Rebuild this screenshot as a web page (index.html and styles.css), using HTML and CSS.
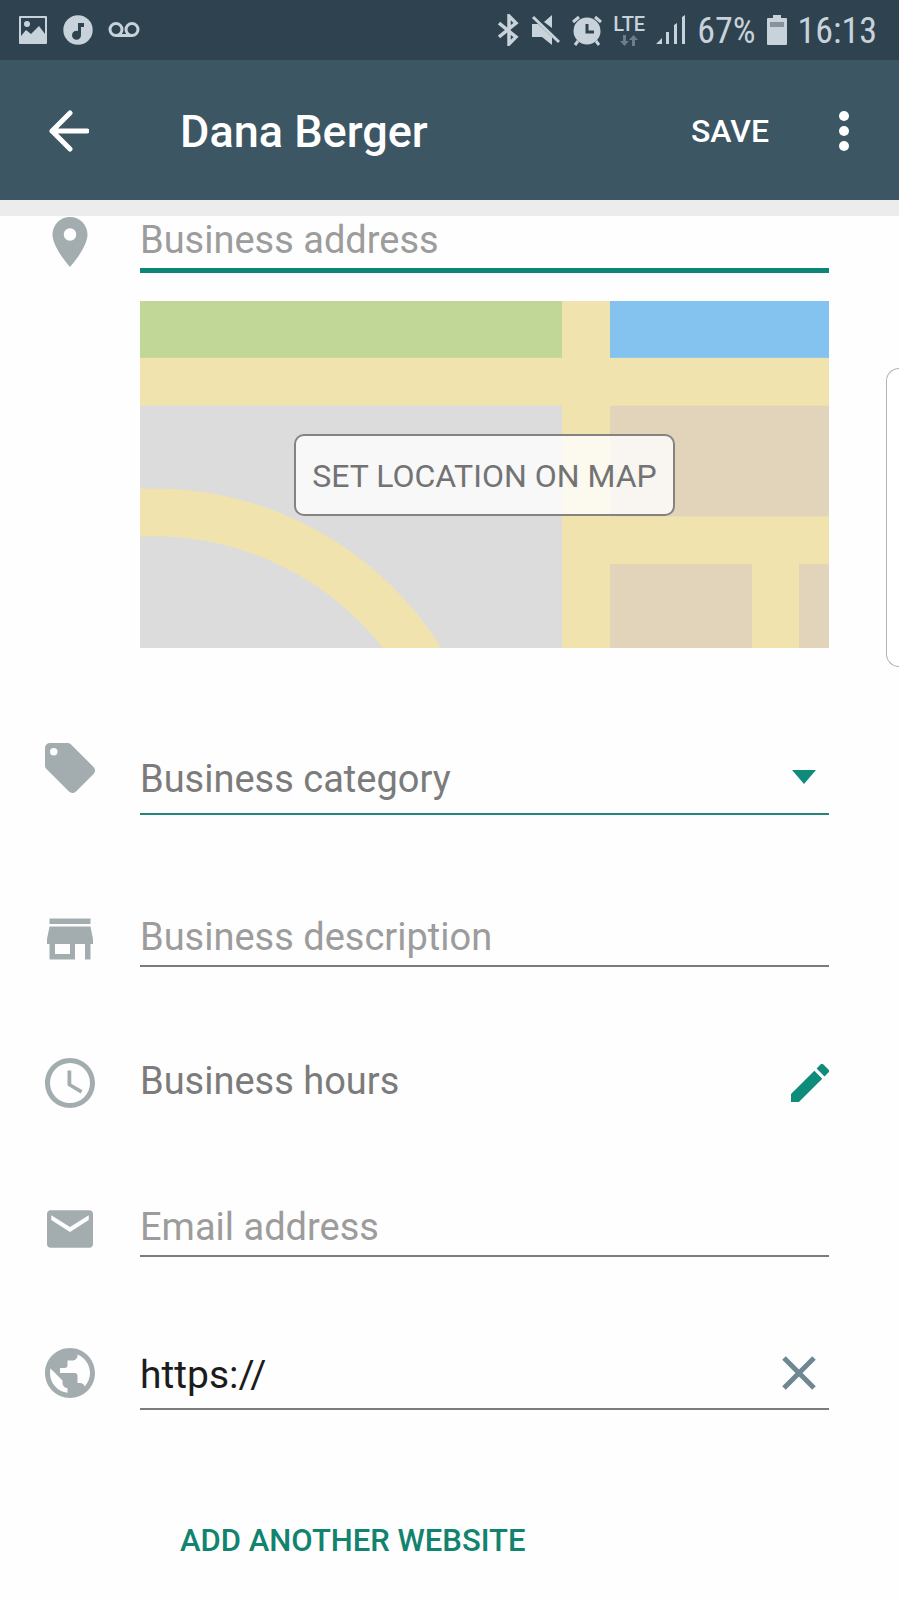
FILE: index.html
```html
<!DOCTYPE html>
<html lang="en">
<head>
<meta charset="utf-8">
<meta name="viewport" content="width=device-width, initial-scale=1">
<title>Dana Berger</title>
<link rel="stylesheet" href="styles.css">
</head>
<body>
<div class="status-bar">
  <div class="status-group status-left">
    <svg width="30" height="30" viewBox="0 0 30 30" aria-hidden="true"><path fill="currentColor" fill-rule="evenodd" d="M2 1h26a1 1 0 0 1 1 1v26a1 1 0 0 1-1 1H2a1 1 0 0 1-1-1V2a1 1 0 0 1 1-1zM3 3v18l5-6 5 4 8-8 6 8V3zM9 6a3 3 0 1 1 0 6 3 3 0 0 1 0-6z"/></svg>
    <svg width="30" height="30" viewBox="0 0 30 30" aria-hidden="true"><circle cx="15" cy="15" r="14.7" fill="currentColor"/><path class="status-cut" d="M15 8h6v4h-3v8a4.5 4.5 0 1 1-3-4z"/></svg>
    <svg width="32" height="16" viewBox="0 0 32 16" fill="none" stroke="currentColor" stroke-width="3" aria-hidden="true"><circle cx="8" cy="7.5" r="6"/><circle cx="24" cy="7.5" r="6"/><path d="M8 13.5h16"/></svg>
  </div>
  <div class="status-group status-right">
    <svg width="22" height="32" viewBox="0 0 22 32" fill="none" stroke="currentColor" stroke-width="3.5" aria-hidden="true"><path d="M1 9l17 14-7 7V2l7 7L1 23"/></svg>
    <svg class="mute" width="30" height="30" viewBox="0 0 30 30" aria-hidden="true"><path fill="currentColor" d="M1 9h6l14 13v8l-10-8H1zM21 0v13l-8-6z"/><path d="M2 2l26 25" stroke="currentColor" stroke-width="3"/></svg>
    <svg width="30" height="31" viewBox="0 0 30 31" aria-hidden="true"><circle cx="15" cy="16" r="13.5" fill="currentColor"/><path d="M1 7l6-5M29 7l-6-5M6 26l-3 4M24 26l3 4" stroke="currentColor" stroke-width="3"/><path class="status-hand" d="M15 9v8h7"/></svg>
    <div class="network">
      <span class="lte">LTE</span>
      <svg width="18" height="11" viewBox="0 0 18 11" aria-hidden="true"><path fill="currentColor" d="M3 0h3v6h3L4.500 11 0 6h3zM12 11h3V5h3L13.500 0 9 5h3z"/></svg>
    </div>
    <svg width="30" height="30" viewBox="0 0 30 30" fill="currentColor" aria-hidden="true"><path d="M0 29l6-6v6zM10 17h3v12h-3zM18 10l3-2v21h-3zM26 2l3-2v29h-3z"/></svg>
    <span class="status-text">67%</span>
    <svg width="20" height="31" viewBox="0 0 20 31" aria-hidden="true"><path fill="currentColor" d="M6 0h8v3h5a1 1 0 0 1 1 1v25a1 1 0 0 1-1 1H1a1 1 0 0 1-1-1V4a1 1 0 0 1 1-1h5z"/><path fill="#87929b" d="M3 7h14v5H3z"/></svg>
    <span class="status-text">16:13</span>
  </div>
</div>

<header class="app-bar">
  <button class="icon-button" type="button" aria-label="Back">
    <svg width="40" height="42" viewBox="0 0 40 42" fill="none" stroke="currentColor" stroke-width="5" stroke-linecap="round" stroke-linejoin="round" aria-hidden="true"><path d="M21 3L3 21l18 18M3 21h35"/></svg>
  </button>
  <h1 class="title">Dana Berger</h1>
  <button class="save" type="button">SAVE</button>
  <button class="icon-button" type="button" aria-label="More options">
    <svg width="10" height="42" viewBox="0 0 10 42" fill="currentColor" aria-hidden="true"><circle cx="5" cy="6" r="5"/><circle cx="5" cy="21" r="5"/><circle cx="5" cy="36" r="5"/></svg>
  </button>
</header>

<form class="profile">
  <div class="row">
    <svg class="row-icon" viewBox="2 2 20 20" aria-hidden="true"><path d="M12 2C8.130 2 5 5.130 5 9c0 5.250 7 13 7 13s7-7.750 7-13c0-3.870-3.130-7-7-7zm0 9.500a2.500 2.500 0 1 1 0-5 2.500 2.500 0 0 1 0 5z"/></svg>
    <div class="content">
      <div class="field field-active"><input type="text" aria-label="Business address" placeholder="Business address"></div>
      <div class="map">
        <svg class="map-art" viewBox="0 0 689 348" preserveAspectRatio="none" aria-hidden="true">
          <rect width="689" height="348" fill="#f0e3ad"/>
          <rect width="422" height="57" fill="#c0d797"/>
          <rect x="470" width="219" height="57" fill="#84c2ef"/>
          <rect y="105" width="422" height="243" fill="#dcdcdc"/>
          <rect x="470" y="105" width="219" height="111" fill="#e2d3bb"/>
          <rect x="470" y="264" width="142" height="84" fill="#e2d3bb"/>
          <rect x="659" y="264" width="30" height="84" fill="#e2d3bb"/>
          <circle cx="13" cy="528" r="316" fill="none" stroke="#f0e3ad" stroke-width="48"/>
        </svg>
        <button class="map-button" type="button">SET LOCATION ON MAP</button>
      </div>
    </div>
  </div>

  <div class="row row-category">
    <svg class="row-icon" viewBox="2 2 20 20" aria-hidden="true"><path d="M21.410 11.580l-9-9C12.050 2.220 11.550 2 11 2H4c-1.100 0-2 .9-2 2v7c0 .55.220 1.050.590 1.420l9 9c.36.360.860.580 1.410.580.550 0 1.050-.220 1.410-.590l7-7c.370-.360.590-.860.590-1.410 0-.550-.230-1.060-.590-1.420zM5.500 7a1.500 1.500 0 1 1 0-3 1.500 1.500 0 0 1 0 3z"/></svg>
    <div class="content field field-select">
      <select aria-label="Business category"><option>Business category</option></select>
      <svg class="caret" width="26" height="14" viewBox="0 0 26 14" aria-hidden="true"><path fill="currentColor" d="M1 0h24L13 14z"/></svg>
    </div>
  </div>

  <div class="row row-description">
    <svg class="row-icon" viewBox="2 2 20 20" aria-hidden="true"><path d="M20.200 3.800H3.800v2.200h16.400V3.800zm1 10.200v-2l-1-5H3.800l-1 5v2h1v6.200h10.200V14h4v6.200h2.200V14h1zm-9.200 4H6v-4h6v4z"/></svg>
    <div class="content field"><input type="text" aria-label="Business description" placeholder="Business description"></div>
  </div>

  <div class="row row-hours">
    <svg class="row-icon" viewBox="2 2 20 20" aria-hidden="true"><path d="M11.990 2C6.470 2 2 6.480 2 12s4.470 10 9.990 10C17.520 22 22 17.520 22 12S17.520 2 11.990 2zM12 20a8 8 0 1 1 0-16 8 8 0 0 1 0 16zm.5-13H11v6l5.250 3.150.750-1.230-4.500-2.670z"/></svg>
    <div class="content hours">
      <span>Business hours</span>
      <button class="icon-button edit" type="button" aria-label="Edit business hours">
        <svg width="38" height="38" viewBox="3 3 18 18" aria-hidden="true"><path fill="currentColor" d="M3 17.250V21h3.750L17.810 9.940l-3.750-3.750L3 17.250zM20.710 7.040a1 1 0 0 0 0-1.410l-2.340-2.340a1 1 0 0 0-1.410 0l-1.830 1.830 3.750 3.750 1.830-1.830z"/></svg>
      </button>
    </div>
  </div>

  <div class="row row-email">
    <svg class="row-icon" viewBox="2 2 20 20" aria-hidden="true"><path fill-rule="evenodd" d="M4.200 4.500h15.600c.75 0 1.400.65 1.400 1.400v12.200c0 .75-.65 1.400-1.400 1.400H4.200c-.75 0-1.400-.65-1.400-1.400V5.900c0-.75.650-1.400 1.400-1.400zM4.500 6.500v1.900L12 13.200l7.500-4.800V6.500L12 11.200z"/></svg>
    <div class="content field"><input type="email" aria-label="Email address" placeholder="Email address"></div>
  </div>

  <div class="row row-website">
    <svg class="row-icon" viewBox="2 2 20 20" aria-hidden="true"><path d="M12 2C6.480 2 2 6.480 2 12s4.480 10 10 10 10-4.480 10-10S17.520 2 12 2zm-1 17.930c-3.950-.490-7-3.850-7-7.930 0-.620.080-1.210.210-1.790L9 15v1c0 1.100.9 2 2 2v1.930zm6.900-2.540c-.260-.810-1-1.390-1.900-1.390h-1v-3c0-.550-.450-1-1-1H8v-2h2c.550 0 1-.450 1-1V7h2c1.100 0 2-.9 2-2v-.410c2.930 1.190 5 4.060 5 7.410 0 2.080-.8 3.970-2.100 5.390z"/></svg>
    <div class="content field field-website">
      <input type="text" aria-label="Website" value="https://">
      <button class="icon-button clear" type="button" aria-label="Clear website">
        <svg width="34" height="34" viewBox="0 0 34 34" fill="none" stroke="currentColor" stroke-width="5" aria-hidden="true"><path d="M2 2l30 30M32 2L2 32"/></svg>
      </button>
    </div>
  </div>

  <button class="add-website" type="button">ADD ANOTHER WEBSITE</button>
</form>
<div class="edge-handle"></div>
</body>
</html>
```
FILE: styles.css
```css
* {
  box-sizing: border-box;
}

body {
  position: relative;
  margin: 0;
  background: #fefefe;
  color: #7b7b7b;
  font-family: Roboto, "Liberation Sans", sans-serif;
  font-size: 38px;
  line-height: 48px;
}

svg {
  display: block;
  flex: none;
}

button,
input,
select {
  margin: 0;
  padding: 0;
  border: 0;
  border-radius: 0;
  outline: 0;
  background: none;
  color: inherit;
  font: inherit;
}

.status-bar {
  display: flex;
  justify-content: space-between;
  height: 60px;
  padding: 0 22px 0 18px;
  background: #2e424f;
  color: #c8d2da;
}

.status-group {
  display: flex;
  align-items: center;
}

.status-left {
  gap: 15px;
}

.status-right {
  gap: 11px;
}

.status-text {
  padding-top: 2px;
  font-family: "Roboto Condensed", Roboto, sans-serif;
  font-size: 36px;
}

.status-cut {
  fill: #2e424f;
}

.status-hand {
  fill: none;
  stroke: #2e424f;
  stroke-width: 3;
}

.network {
  display: flex;
  flex-direction: column;
  align-items: center;
  gap: 2px;
}

.network svg {
  color: #6d7d88;
}

.lte {
  font-size: 20px;
  font-weight: 500;
  line-height: 18px;
}

.app-bar {
  display: flex;
  align-items: center;
  height: 140px;
  padding: 2px 50px 0 49px;
  background: #3c5663;
  color: #fff;
}

.icon-button {
  display: flex;
  flex: none;
}

.title {
  flex: 1;
  margin: 0 0 0 91px;
  padding-top: 2px;
  font-size: 45px;
  font-weight: 500;
  line-height: 54px;
}

.save {
  margin-right: 70px;
  font-size: 32px;
  font-weight: 500;
  line-height: 40px;
}

.profile {
  padding: 0 70px 30px 45px;
  border-top: 16px solid #ececec;
}

.row {
  display: flex;
  align-items: flex-start;
  gap: 45px;
}

.row-icon {
  width: 50px;
  height: 50px;
  margin-top: 1px;
  fill: #a3adb0;
}

.content {
  flex: 1;
  min-width: 0;
}

.field {
  display: flex;
  padding-bottom: 4px;
  border-bottom: 2px solid #7c7c7c;
}

.field input,
.field select {
  flex: 1;
  min-width: 0;
  height: 48px;
}

.field input::placeholder {
  color: #9c9c9c;
  opacity: 1;
}

.field-active {
  border-bottom: 5px solid #0f8577;
}

.map {
  display: grid;
  place-items: center;
  margin-top: 28px;
}

.map-art,
.map-button {
  grid-area: 1 / 1;
}

.map-art {
  width: 100%;
  height: 347px;
}

.map-button {
  z-index: 1;
  padding: 20px 16px 18px;
  border: 2px solid #858380;
  border-radius: 10px;
  background: rgba(255, 255, 255, 0.8);
  color: #737373;
  font-size: 32px;
  line-height: 40px;
}

.row-category {
  margin-top: 94px;
}

.field-select {
  align-items: center;
  padding: 13px 12px 10px 0;
  border-bottom-color: #26857a;
}

.field-select select {
  appearance: none;
}

.caret {
  margin-bottom: 4px;
  color: #0f8b7c;
}

.row-description {
  margin-top: 98px;
}

.row-hours {
  margin-top: 90px;
}

.hours {
  display: flex;
  align-items: center;
  justify-content: space-between;
}

.edit {
  padding-top: 4px;
  color: #0f8b7c;
}

.row-email {
  margin-top: 95px;
}

.row-website {
  margin-top: 90px;
}

.field-website {
  align-items: center;
  padding: 4px 13px 9px 0;
}

.field-website input {
  color: #1c1c1c;
  font-size: 39px;
}

.clear {
  padding-bottom: 4px;
  color: #6f8792;
}

.add-website {
  margin: 111px 0 0 135px;
  color: #12836f;
  font-size: 31px;
  font-weight: 500;
  line-height: 40px;
}

.edge-handle {
  position: absolute;
  top: 368px;
  right: 0;
  width: 13px;
  height: 299px;
  border: 1px solid #b4b4b4;
  border-right: 0;
  border-radius: 13px 0 0 13px;
  background: #fff;
}
```
